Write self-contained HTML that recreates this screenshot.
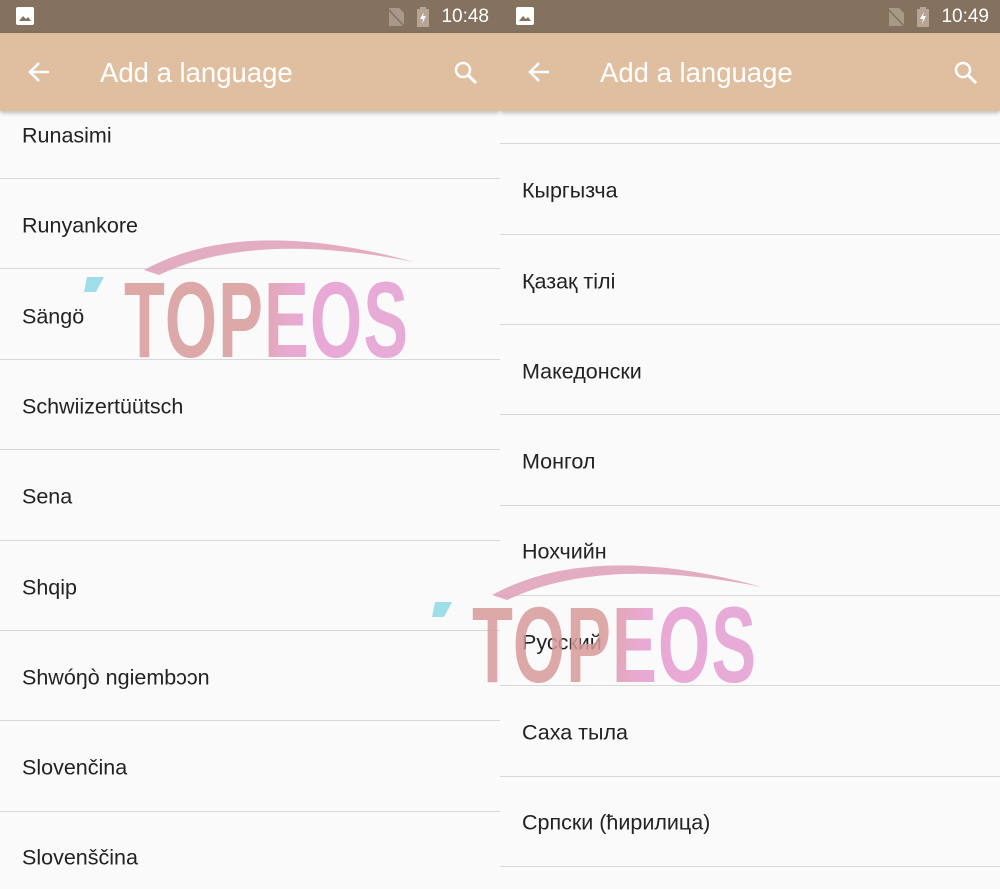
<!DOCTYPE html>
<html><head><meta charset="utf-8"><style>
*{margin:0;padding:0;box-sizing:border-box}
body{width:1000px;height:889px;overflow:hidden;background:#fafafa;font-family:"Liberation Sans","DejaVu Sans",sans-serif;position:relative}
.pane{position:absolute;top:0;width:500px;height:889px;overflow:hidden;background:#fafafa}
.sb{position:absolute;top:0;left:0;width:500px;height:33px;background:#84725f}
.ab{position:absolute;top:33px;left:0;width:500px;height:78px;background:#dfbf9f;box-shadow:0 2px 4px rgba(0,0,0,.25);z-index:2}
.title{position:absolute;left:100px;top:24px;color:#fff;font-size:27.5px}
.time{position:absolute;right:11px;top:6px;color:#fff;font-size:19px}
.item{position:absolute;left:22px;font-size:21.5px;color:#222;transform:translateY(-50%);margin-top:2px}
.div{position:absolute;left:0;width:500px;height:1px;background:#d8d8d8}
.wm{position:absolute;z-index:3;pointer-events:none;opacity:.85}
.wmt{position:absolute;font-family:"Liberation Sans Narrow","Liberation Sans",sans-serif;font-weight:bold;font-size:108px;line-height:1;transform:scaleX(.62);transform-origin:left top;background:linear-gradient(100deg,#d99a9a 0%,#d99a9a 45%,#e79bcf 60%,#e39fd2 100%);-webkit-background-clip:text;color:transparent;letter-spacing:2px}
</style></head><body>
<div class="pane" style="left:0">
<div class="sb"><svg style="position:absolute;left:16px;top:7px" width="18" height="18"><rect x="0" y="0" width="18" height="18" rx="2" fill="#fff"/><path d="M3 14 L7 9 L10 12 L12 10 L15 14Z" fill="#84725f"/></svg>
<svg style="position:absolute;left:387px;top:8px" width="18" height="18"><path d="M2 0H12L17 5V18H2Z" fill="#a89888"/><path d="M1 1L17 18" stroke="#84725f" stroke-width="1.5"/></svg>
<svg style="position:absolute;left:416px;top:7px" width="14" height="20"><rect x="1" y="2" width="12" height="18" fill="#b5a595"/><rect x="4" y="0" width="6" height="3" fill="#b5a595"/><path d="M8 5L4 12H7L6 17L10 9H7Z" fill="#fff"/></svg>
<div class="time">10:48</div></div>
<div class="ab"><svg style="position:absolute;left:27px;top:27px" width="24" height="24"><path d="M22 12H4M12 3L3 12L12 21" stroke="#fff" stroke-width="2.5" fill="none"/></svg><div class="title">Add a language</div><svg style="position:absolute;left:452px;top:26px" width="28" height="28"><circle cx="11" cy="11" r="7" stroke="#fff" stroke-width="2.5" fill="none"/><path d="M16 16L24 24" stroke="#fff" stroke-width="3"/></svg></div>
<div class="item" style="top:134px">Runasimi</div><div class="div" style="top:178px"></div>
<div class="item" style="top:224px">Runyankore</div><div class="div" style="top:268px"></div>
<div class="item" style="top:315px">Sängö</div><div class="div" style="top:359px"></div>
<div class="item" style="top:405px">Schwiizertüütsch</div><div class="div" style="top:449px"></div>
<div class="item" style="top:495px">Sena</div><div class="div" style="top:540px"></div>
<div class="item" style="top:586px">Shqip</div><div class="div" style="top:630px"></div>
<div class="item" style="top:676px">Shwóŋò ngiembɔɔn</div><div class="div" style="top:720px"></div>
<div class="item" style="top:766px">Slovenčina</div><div class="div" style="top:811px"></div>
<div class="item" style="top:856px">Slovenščina</div>
</div>
<div class="pane" style="left:500px">
<div class="sb"><svg style="position:absolute;left:16px;top:7px" width="18" height="18"><rect x="0" y="0" width="18" height="18" rx="2" fill="#fff"/><path d="M3 14 L7 9 L10 12 L12 10 L15 14Z" fill="#84725f"/></svg>
<svg style="position:absolute;left:387px;top:8px" width="18" height="18"><path d="M2 0H12L17 5V18H2Z" fill="#a89888"/><path d="M1 1L17 18" stroke="#84725f" stroke-width="1.5"/></svg>
<svg style="position:absolute;left:416px;top:7px" width="14" height="20"><rect x="1" y="2" width="12" height="18" fill="#b5a595"/><rect x="4" y="0" width="6" height="3" fill="#b5a595"/><path d="M8 5L4 12H7L6 17L10 9H7Z" fill="#fff"/></svg>
<div class="time">10:49</div></div>
<div class="ab"><svg style="position:absolute;left:27px;top:27px" width="24" height="24"><path d="M22 12H4M12 3L3 12L12 21" stroke="#fff" stroke-width="2.5" fill="none"/></svg><div class="title">Add a language</div><svg style="position:absolute;left:452px;top:26px" width="28" height="28"><circle cx="11" cy="11" r="7" stroke="#fff" stroke-width="2.5" fill="none"/><path d="M16 16L24 24" stroke="#fff" stroke-width="3"/></svg></div>
<div class="div" style="top:143px"></div>
<div class="item" style="top:189px">Кыргызча</div><div class="div" style="top:234px"></div>
<div class="item" style="top:280px">Қазақ тілі</div><div class="div" style="top:324px"></div>
<div class="item" style="top:370px">Македонски</div><div class="div" style="top:414px"></div>
<div class="item" style="top:460px">Монгол</div><div class="div" style="top:505px"></div>
<div class="item" style="top:550px">Нохчийн</div><div class="div" style="top:595px"></div>
<div class="item" style="top:641px">Русский</div><div class="div" style="top:685px"></div>
<div class="item" style="top:731px">Саха тыла</div><div class="div" style="top:776px"></div>
<div class="item" style="top:821px">Српски (ћирилица)</div><div class="div" style="top:866px"></div>
</div>
<div class="wm" style="left:84px;top:230px;width:330px;height:130px">
<svg style="position:absolute;left:0;top:0" width="330" height="130"><path d="M60 40 Q160 -15 330 32 Q170 0 75 45Z" fill="#e0a0b8"/><path d="M3 47H20L12 62H0Z" fill="#8fd8e8"/></svg>
<div class="wmt" style="left:40px;top:36px">TOPEOS</div></div>
<div class="wm" style="left:432px;top:555px;width:330px;height:130px">
<svg style="position:absolute;left:0;top:0" width="330" height="130"><path d="M60 40 Q160 -15 330 32 Q170 0 75 45Z" fill="#e0a0b8"/><path d="M3 47H20L12 62H0Z" fill="#8fd8e8"/></svg>
<div class="wmt" style="left:40px;top:36px">TOPEOS</div></div>
</body></html>
